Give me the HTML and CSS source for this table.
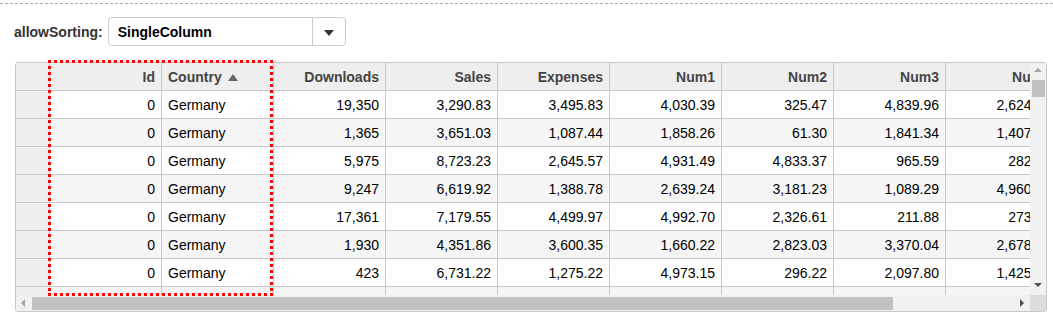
FILE: index.html
```html
<!DOCTYPE html>
<html lang="en">
<head>
    <meta charset="UTF-8">
    <title>FlexGrid allowSorting</title>
    <link rel="stylesheet" href="styles.css">
</head>
<body>
    <div class="demo">
        <div class="opciones">
            <label class="etiqueta">allowSorting:</label>
            <div class="combo">
                <span class="combo-texto">SingleColumn</span>
                <span class="combo-boton"><span class="flecha-abajo"></span></span>
            </div>
        </div>

        <div class="grid">
            <div class="vista">
                <div class="fila cabecera">
                    <div class="celda lateral"></div>
                    <div class="celda">Id</div>
                    <div class="celda izq">Country <span class="orden"></span></div>
                    <div class="celda">Downloads</div>
                    <div class="celda">Sales</div>
                    <div class="celda">Expenses</div>
                    <div class="celda">Num1</div>
                    <div class="celda">Num2</div>
                    <div class="celda">Num3</div>
                    <div class="celda">Num4</div>
                </div>
                <div class="fila">
                    <div class="celda lateral"></div>
                    <div class="celda">0</div><div class="celda izq">Germany</div>
                    <div class="celda">19,350</div><div class="celda">3,290.83</div><div class="celda">3,495.83</div>
                    <div class="celda">4,030.39</div><div class="celda">325.47</div><div class="celda">4,839.96</div><div class="celda">2,624.18</div>
                </div>
                <div class="fila alt">
                    <div class="celda lateral"></div>
                    <div class="celda">0</div><div class="celda izq">Germany</div>
                    <div class="celda">1,365</div><div class="celda">3,651.03</div><div class="celda">1,087.44</div>
                    <div class="celda">1,858.26</div><div class="celda">61.30</div><div class="celda">1,841.34</div><div class="celda">1,407.52</div>
                </div>
                <div class="fila">
                    <div class="celda lateral"></div>
                    <div class="celda">0</div><div class="celda izq">Germany</div>
                    <div class="celda">5,975</div><div class="celda">8,723.23</div><div class="celda">2,645.57</div>
                    <div class="celda">4,931.49</div><div class="celda">4,833.37</div><div class="celda">965.59</div><div class="celda">282.61</div>
                </div>
                <div class="fila alt">
                    <div class="celda lateral"></div>
                    <div class="celda">0</div><div class="celda izq">Germany</div>
                    <div class="celda">9,247</div><div class="celda">6,619.92</div><div class="celda">1,388.78</div>
                    <div class="celda">2,639.24</div><div class="celda">3,181.23</div><div class="celda">1,089.29</div><div class="celda">4,960.07</div>
                </div>
                <div class="fila">
                    <div class="celda lateral"></div>
                    <div class="celda">0</div><div class="celda izq">Germany</div>
                    <div class="celda">17,361</div><div class="celda">7,179.55</div><div class="celda">4,499.97</div>
                    <div class="celda">4,992.70</div><div class="celda">2,326.61</div><div class="celda">211.88</div><div class="celda">273.44</div>
                </div>
                <div class="fila alt">
                    <div class="celda lateral"></div>
                    <div class="celda">0</div><div class="celda izq">Germany</div>
                    <div class="celda">1,930</div><div class="celda">4,351.86</div><div class="celda">3,600.35</div>
                    <div class="celda">1,660.22</div><div class="celda">2,823.03</div><div class="celda">3,370.04</div><div class="celda">2,678.90</div>
                </div>
                <div class="fila">
                    <div class="celda lateral"></div>
                    <div class="celda">0</div><div class="celda izq">Germany</div>
                    <div class="celda">423</div><div class="celda">6,731.22</div><div class="celda">1,275.22</div>
                    <div class="celda">4,973.15</div><div class="celda">296.22</div><div class="celda">2,097.80</div><div class="celda">1,425.36</div>
                </div>
                <div class="fila alt">
                    <div class="celda lateral"></div>
                    <div class="celda">0</div><div class="celda izq">Germany</div>
                    <div class="celda">8,102</div><div class="celda">2,514.09</div><div class="celda">3,310.64</div>
                    <div class="celda">1,204.50</div><div class="celda">4,118.73</div><div class="celda">742.16</div><div class="celda">3,051.27</div>
                </div>
            </div>

            <div class="scroll-v">
                <span class="flecha arriba"></span>
                <span class="pulgar-v"></span>
                <span class="flecha abajo"></span>
            </div>
            <div class="scroll-h">
                <span class="flecha izquierda"></span>
                <span class="pulgar-h"></span>
                <span class="flecha derecha"></span>
            </div>
            <div class="esquina"></div>

            <!-- marco rojo sobre las columnas ordenadas -->
            <div class="marco"></div>
        </div>
    </div>
</body>
</html>
```

FILE: styles.css
```css
body {
    margin: 0;
    font-family: 'Liberation Sans', Arial, sans-serif;
    font-size: 14px;
    color: #000;
    background: #fff;
}

.demo {
    margin-top: 3px;
    border-top: 1px dashed #aaa;
    padding-top: 13px;
}

.opciones {
    display: flex;
    align-items: center;
    gap: 5px;
    padding-left: 14px;
}

.etiqueta {
    font-weight: bold;
    color: #333;
    padding-top: 1px;
}

.combo {
    display: flex;
    width: 238px;
    height: 29px;
    box-sizing: border-box;
    border: 1px solid #ccc;
    border-radius: 4px;
}

.combo-texto {
    flex: 1;
    padding-left: 9px;
    line-height: 28px;
    font-weight: bold;
}

.combo-boton {
    width: 32px;
    border-left: 1px solid #ccc;
    display: flex;
    align-items: center;
    justify-content: center;
}

.flecha-abajo {
    border-left: 5px solid transparent;
    border-right: 5px solid transparent;
    border-top: 6px solid #333;
    margin-top: 2px;
}

.grid {
    position: relative;
    margin: 16px 0 0 15px;
    width: 1032px;
    height: 250px;
    box-sizing: border-box;
    border: 1px solid #c8c8c8;
    border-radius: 3px;
    display: grid;
    grid-template-columns: 1fr 16px;
    grid-template-rows: 1fr 16px;
}

.vista {
    overflow: hidden;
    border-top-left-radius: 2px;
}

.fila {
    display: flex;
    width: max-content;
    background: #fff;
}

.fila.alt {
    background: #f5f5f5;
}

.celda {
    flex: none;
    width: 112px;
    height: 28px;
    box-sizing: border-box;
    border-right: 1px solid #c8c8c8;
    border-bottom: 1px solid #c8c8c8;
    padding: 1px 6px 0;
    line-height: 27px;
    text-align: right;
    white-space: nowrap;
    overflow: hidden;
}

.celda.izq {
    text-align: left;
}

.celda.lateral {
    width: 34px;
    background: #eee;
}

.cabecera {
    background: #eee;
}

.cabecera .celda {
    font-weight: bold;
    color: #444;
}

.orden {
    display: inline-block;
    margin-left: 2px;
    border-left: 5px solid transparent;
    border-right: 5px solid transparent;
    border-bottom: 7px solid #666;
    vertical-align: 1px;
}

.scroll-v {
    background: #f1f1f1;
    position: relative;
    border-top-right-radius: 2px;
}

.pulgar-v {
    position: absolute;
    left: 2px;
    right: 1px;
    top: 17px;
    height: 17px;
    background: #c1c1c1;
}

.scroll-h {
    background: #f1f1f1;
    position: relative;
    border-bottom-left-radius: 2px;
}

.pulgar-h {
    position: absolute;
    left: 16px;
    width: 861px;
    top: 2px;
    bottom: 1px;
    background: #c1c1c1;
}

.esquina {
    background: #dcdcdc;
    border-bottom-right-radius: 2px;
}

.flecha {
    position: absolute;
    width: 0;
    height: 0;
}

.flecha.arriba {
    left: 4px;
    top: 5px;
    border-left: 4px solid transparent;
    border-right: 4px solid transparent;
    border-bottom: 4px solid #a3a3a3;
}

.flecha.abajo {
    left: 4px;
    bottom: 8px;
    border-left: 4px solid transparent;
    border-right: 4px solid transparent;
    border-top: 4px solid #505050;
}

.flecha.izquierda {
    left: 5px;
    top: 4px;
    border-top: 4px solid transparent;
    border-bottom: 4px solid transparent;
    border-right: 4px solid #a3a3a3;
}

.flecha.derecha {
    right: 6px;
    top: 4px;
    border-top: 4px solid transparent;
    border-bottom: 4px solid transparent;
    border-left: 4px solid #505050;
}

/* puntos cuadrados de 3px, como en la captura */
.marco {
    position: absolute;
    left: 32px;
    top: -3px;
    width: 225px;
    height: 236px;
    pointer-events: none;
    background:
        repeating-linear-gradient(90deg, #f00 0 3px, transparent 3px 6px) left top / 100% 3px no-repeat,
        repeating-linear-gradient(90deg, #f00 0 3px, transparent 3px 6px) left bottom / 100% 3px no-repeat,
        repeating-linear-gradient(180deg, #f00 0 3px, transparent 3px 6px) left top / 3px 100% no-repeat,
        repeating-linear-gradient(180deg, #f00 0 3px, transparent 3px 6px) right top / 3px 100% no-repeat;
}
```
